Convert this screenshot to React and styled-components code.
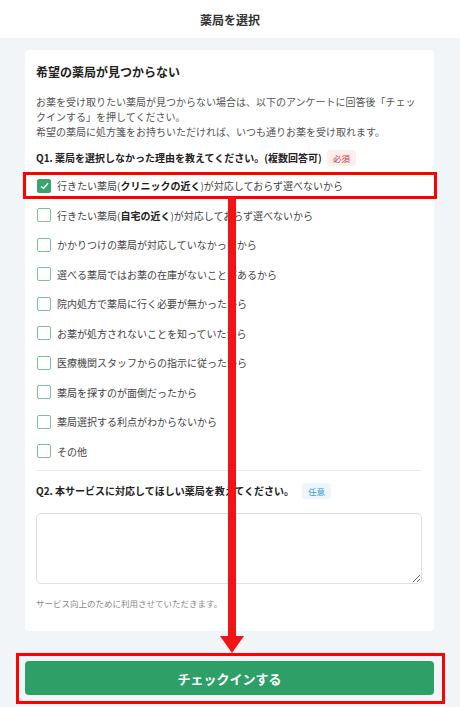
import React from "react";
import styled, { createGlobalStyle } from "styled-components";

const GlobalStyle = createGlobalStyle`
  body {
    margin: 0;
    background: #f2f5f8;
    font-family: "Noto Sans CJK JP", "Noto Sans", sans-serif;
    color: #444;
  }
`;

const Page = styled.div`
  position: relative;
  width: 460px;
  height: 707px;
  overflow: hidden;
`;

const Header = styled.header`
  height: 38px;
  background: #fff;
  display: flex;
  align-items: center;
  justify-content: center;
  font-size: 12px;
  font-weight: 700;
  color: #333;
`;

const Main = styled.main`
  padding: 12px 26px 0 25px;
`;

const Card = styled.section`
  background: #fff;
  border-radius: 4px;
  padding: 13px 12px 21px 11px;
`;

const Title = styled.h2`
  margin: 0;
  font-size: 12px;
  line-height: 18px;
  font-weight: 700;
  color: #222;
`;

const Lead = styled.p`
  margin: 12.5px 0 0;
  font-size: 10px;
  line-height: 15px;
  color: #555;
`;

const Question = styled.div`
  display: flex;
  align-items: center;
  margin-top: ${(p) => p.$top}px;
  font-size: 10px;
  line-height: 18px;
  font-weight: 700;
  color: #222;
`;

const Badge = styled.span`
  margin-left: ${(p) => (p.$required ? 5 : 8)}px;
  padding: 0 6px;
  height: 16px;
  display: inline-flex;
  align-items: center;
  border-radius: 3px;
  font-size: 8.5px;
  font-weight: 400;
  color: ${(p) => (p.$required ? "#d8343a" : "#3a9be0")};
  background: ${(p) => (p.$required ? "#fdeeee" : "#eef6fc")};
`;

const Options = styled.ul`
  list-style: none;
  margin: 4px 0 0;
  padding: 0;
`;

const Option = styled.li`
  height: 29.5px;
  display: flex;
  align-items: center;
  gap: 6px;
  padding-left: 1px;
  font-size: 10px;
  color: #444;
  b {
    font-weight: 700;
    color: #222;
  }
`;

const Box = styled.span`
  width: 14px;
  height: 14px;
  box-sizing: border-box;
  border-radius: 2px;
  border: 1px solid ${(p) => (p.$checked ? "#3aa46c" : "#7cc29d")};
  background: ${(p) => (p.$checked ? "#3aa46c" : "#fff")};
  display: flex;
  align-items: center;
  justify-content: center;
  flex: none;
`;

const Divider = styled.hr`
  margin: 4px 0 0;
  border: 0;
  border-top: 1px solid #e8ebee;
`;

const TextArea = styled.textarea`
  display: block;
  margin-top: 13px;
  width: 100%;
  height: 71px;
  box-sizing: border-box;
  border: 1px solid #dcdfe3;
  border-radius: 5px;
  font-family: inherit;
`;

const Note = styled.p`
  margin: 12px 0 0;
  font-size: 8.5px;
  line-height: 14px;
  color: #888;
`;

const Submit = styled.button`
  margin-top: 30px;
  width: 100%;
  height: 34px;
  border: 0;
  border-radius: 4px;
  background: #2e9f67;
  color: #fff;
  font-family: inherit;
  font-size: 13px;
  font-weight: 700;
`;

const Frame = styled.div`
  position: absolute;
  left: ${(p) => p.$x}px;
  top: ${(p) => p.$y}px;
  width: ${(p) => p.$w}px;
  height: ${(p) => p.$h}px;
  box-sizing: border-box;
  border: 3px solid #ff0000;
  pointer-events: none;
`;

const Arrow = styled.svg`
  position: absolute;
  left: 219px;
  top: 197px;
  pointer-events: none;
`;

const reasons = [
  { text: <>行きたい薬局(<b>クリニックの近く</b>)が対応しておらず選べないから</>, checked: true },
  { text: <>行きたい薬局(<b>自宅の近く</b>)が対応しておらず選べないから</> },
  { text: "かかりつけの薬局が対応していなかったから" },
  { text: "選べる薬局ではお薬の在庫がないことがあるから" },
  { text: "院内処方で薬局に行く必要が無かったから" },
  { text: "お薬が処方されないことを知っていたから" },
  { text: "医療機関スタッフからの指示に従ったから" },
  { text: "薬局を探すのが面倒だったから" },
  { text: "薬局選択する利点がわからないから" },
  { text: "その他" },
];

export default function App() {
  return (
    <Page>
      <GlobalStyle />
      <Header>薬局を選択</Header>
      <Main>
        <Card>
          <Title>希望の薬局が見つからない</Title>
          <Lead>
            お薬を受け取りたい薬局が見つからない場合は、以下のアンケートに回答後「チェックインする」を押してください。
            <br />
            希望の薬局に処方箋をお持ちいただければ、いつも通りお薬を受け取れます。
          </Lead>
          <Question $top={10.5}>
            Q1. 薬局を選択しなかった理由を教えてください。(複数回答可)
            <Badge $required>必須</Badge>
          </Question>
          <Options>
            {reasons.map((r, i) => (
              <Option key={i}>
                <Box $checked={r.checked}>
                  {r.checked && (
                    <svg width="9" height="8" viewBox="0 0 9 8">
                      <path d="M1 4.2 L3.4 6.5 L8 1.3" fill="none" stroke="#fff" strokeWidth="1.5" />
                    </svg>
                  )}
                </Box>
                <span>{r.text}</span>
              </Option>
            ))}
          </Options>
          <Divider />
          <Question $top={11}>
            Q2. 本サービスに対応してほしい薬局を教えてください。
            <Badge>任意</Badge>
          </Question>
          <TextArea />
          <Note>サービス向上のために利用させていただきます。</Note>
        </Card>
        <Submit>チェックインする</Submit>
      </Main>
      <Frame $x={23} $y={172} $w={414} $h={27} />
      <Arrow width="26" height="456" viewBox="0 0 26 456">
        <rect x="9" y="0" width="8" height="440" fill="#f01414" />
        <polygon points="1,439 25,439 13,456" fill="#f01414" />
      </Arrow>
      <Frame $x={16} $y={653} $w={429} $h={51} />
    </Page>
  );
}
